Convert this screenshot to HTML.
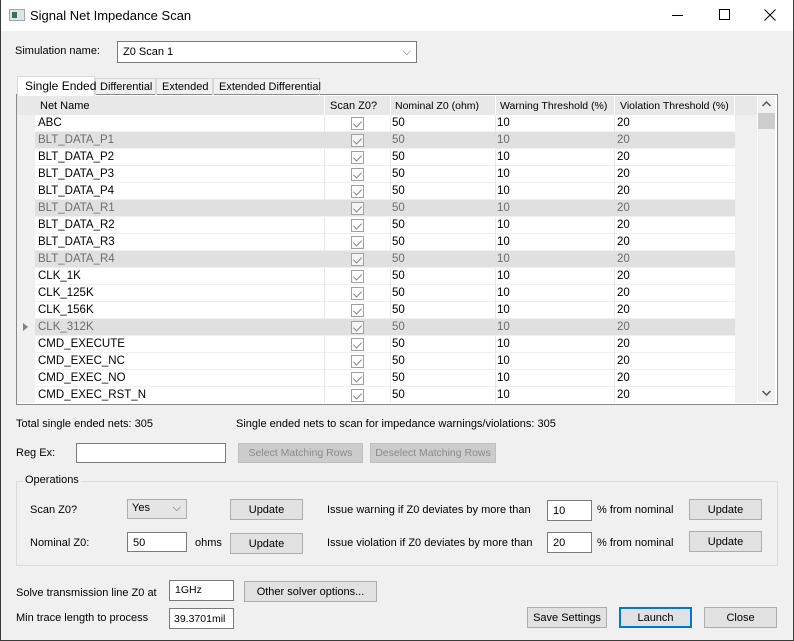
<!DOCTYPE html><html><head><style>
*{box-sizing:border-box;margin:0;padding:0}
body{width:794px;height:641px;overflow:hidden;font-family:"Liberation Sans",sans-serif;font-size:11px;color:#000;background:#f0f0f0;position:relative}
.a{position:absolute;white-space:nowrap}
.win{position:absolute;left:0;top:0;width:794px;height:641px;border:1px solid #3a3a3a;border-top:none}
.btn{position:absolute;background:#e1e1e1;border:1px solid #adadad;text-align:center;line-height:20px;white-space:nowrap}
.inp{position:absolute;background:#fff;border:1px solid #7a7a7a;padding-left:5px;line-height:20px;white-space:nowrap}
.row{position:absolute;left:35px;width:700px;height:17px;background:#fff;border-bottom:1px solid #f0f0f0;font-size:11.5px}
.row.g{background:#e0e0e0;color:#6d6d6d}
.row span{position:absolute;top:2px}
.cb{position:absolute;left:316px;top:2px;width:13px;height:13px;border:1px solid #a0a0a0;background:#fff}
.row.g .cb{background:#f4f4f4}
.cb:after{content:"";position:absolute;left:3px;top:1px;width:4px;height:7px;border:solid #888;border-width:0 1px 1px 0;transform:rotate(45deg)}
.vl{position:absolute;top:0;width:1px;height:17px;background:#e8e8e8}
.tab{position:absolute;border:1px solid #d9d9d9;border-bottom:none;line-height:17px;white-space:nowrap;font-size:11px}
</style></head><body>
<div class="win"></div>
<div class="a" style="left:1px;top:0;width:792px;height:31px;background:#fff"></div>
<div class="a" style="left:9px;top:9px;width:16px;height:12px;background:#dfe3e6;border:1px solid #9aa"><div style="position:absolute;left:2px;top:2px;width:5px;height:6px;background:#3c6e5e"></div></div>
<div class="a" style="left:30px;top:8px;font-size:13px">Signal Net Impedance Scan</div>
<div class="a" style="left:672px;top:15px;width:11px;height:1px;background:#000"></div>
<div class="a" style="left:719px;top:9px;width:11px;height:11px;border:1px solid #000"></div>
<svg class="a" style="left:764px;top:9px" width="12" height="12"><path d="M0.5 0.5L11.5 11.5M11.5 0.5L0.5 11.5" stroke="#000" stroke-width="1"/></svg>

<div class="a" style="left:15px;top:45px">Simulation name:</div>
<div class="inp" style="left:117px;top:41px;width:300px;height:22px;border-color:#7a7a7a">Z0 Scan 1<span style="position:absolute;right:5px;top:0;color:#555">⌵</span></div>

<div class="a" style="left:16px;top:94px;width:762px;height:311px;border:1px solid #898989;background:#fff"></div>
<div class="tab" style="left:95px;top:78px;width:61px;height:17px;padding-left:4px">Differential</div>
<div class="tab" style="left:156px;top:78px;width:57px;height:17px;padding-left:5px">Extended</div>
<div class="tab" style="left:213px;top:78px;width:107px;height:17px;padding-left:5px">Extended Differential</div>
<div class="tab" style="left:17px;top:76px;width:78px;height:20px;background:#fff;padding-left:7px;line-height:19px;font-size:12px">Single Ended</div>

<div class="a" style="left:17px;top:96px;width:740px;height:307px;background:#f0f0f0"></div>
<div class="a" style="left:17px;top:96px;width:740px;height:19px;background:#e8e8e8"></div>
<div class="a" style="left:40px;top:100px;font-size:11px">Net Name</div>
<div class="a" style="left:324px;top:96px;width:1px;height:19px;background:#fff"></div>
<div class="a" style="left:330px;top:100px;font-size:11px">Scan Z0?</div>
<div class="a" style="left:390px;top:96px;width:1px;height:19px;background:#fff"></div>
<div class="a" style="left:395px;top:100px;font-size:10.5px">Nominal Z0 (ohm)</div>
<div class="a" style="left:495px;top:96px;width:1px;height:19px;background:#fff"></div>
<div class="a" style="left:500px;top:100px;font-size:10.5px">Warning Threshold (%)</div>
<div class="a" style="left:614px;top:96px;width:1px;height:19px;background:#fff"></div>
<div class="a" style="left:620px;top:100px;font-size:10.5px">Violation Threshold (%)</div>
<div class="a" style="left:734px;top:96px;width:1px;height:19px;background:#fff"></div>
<div class="a" style="left:758px;top:96px;width:17px;height:306px;background:#f0f0f0"></div>
<svg class="a" style="left:762px;top:101px" width="9" height="6"><path d="M0.5 5L4.5 1L8.5 5" fill="none" stroke="#555" stroke-width="1.5"/></svg>
<div class="a" style="left:758px;top:113px;width:17px;height:16px;background:#cdcdcd"></div>
<svg class="a" style="left:762px;top:390px" width="9" height="6"><path d="M0.5 1L4.5 5L8.5 1" fill="none" stroke="#555" stroke-width="1.5"/></svg>
<div class="a" style="left:23px;top:323px;width:0;height:0;border-left:5px solid #808080;border-top:4px solid transparent;border-bottom:4px solid transparent"></div>
<div class="a" style="left:17px;top:115px;width:740px;height:288px;overflow:hidden">
<div style="position:relative;left:-17px;top:-115px">
<div class="row" style="top:115px"><span style="left:3px">ABC</span><div class="cb"></div><span style="left:357px">50</span><span style="left:462px">10</span><span style="left:582px">20</span><div class="vl" style="left:289px"></div><div class="vl" style="left:355px"></div><div class="vl" style="left:460px"></div><div class="vl" style="left:579px"></div></div>
<div class="row g" style="top:132px"><span style="left:3px">BLT_DATA_P1</span><div class="cb"></div><span style="left:357px">50</span><span style="left:462px">10</span><span style="left:582px">20</span></div>
<div class="row" style="top:149px"><span style="left:3px">BLT_DATA_P2</span><div class="cb"></div><span style="left:357px">50</span><span style="left:462px">10</span><span style="left:582px">20</span><div class="vl" style="left:289px"></div><div class="vl" style="left:355px"></div><div class="vl" style="left:460px"></div><div class="vl" style="left:579px"></div></div>
<div class="row" style="top:166px"><span style="left:3px">BLT_DATA_P3</span><div class="cb"></div><span style="left:357px">50</span><span style="left:462px">10</span><span style="left:582px">20</span><div class="vl" style="left:289px"></div><div class="vl" style="left:355px"></div><div class="vl" style="left:460px"></div><div class="vl" style="left:579px"></div></div>
<div class="row" style="top:183px"><span style="left:3px">BLT_DATA_P4</span><div class="cb"></div><span style="left:357px">50</span><span style="left:462px">10</span><span style="left:582px">20</span><div class="vl" style="left:289px"></div><div class="vl" style="left:355px"></div><div class="vl" style="left:460px"></div><div class="vl" style="left:579px"></div></div>
<div class="row g" style="top:200px"><span style="left:3px">BLT_DATA_R1</span><div class="cb"></div><span style="left:357px">50</span><span style="left:462px">10</span><span style="left:582px">20</span></div>
<div class="row" style="top:217px"><span style="left:3px">BLT_DATA_R2</span><div class="cb"></div><span style="left:357px">50</span><span style="left:462px">10</span><span style="left:582px">20</span><div class="vl" style="left:289px"></div><div class="vl" style="left:355px"></div><div class="vl" style="left:460px"></div><div class="vl" style="left:579px"></div></div>
<div class="row" style="top:234px"><span style="left:3px">BLT_DATA_R3</span><div class="cb"></div><span style="left:357px">50</span><span style="left:462px">10</span><span style="left:582px">20</span><div class="vl" style="left:289px"></div><div class="vl" style="left:355px"></div><div class="vl" style="left:460px"></div><div class="vl" style="left:579px"></div></div>
<div class="row g" style="top:251px"><span style="left:3px">BLT_DATA_R4</span><div class="cb"></div><span style="left:357px">50</span><span style="left:462px">10</span><span style="left:582px">20</span></div>
<div class="row" style="top:268px"><span style="left:3px">CLK_1K</span><div class="cb"></div><span style="left:357px">50</span><span style="left:462px">10</span><span style="left:582px">20</span><div class="vl" style="left:289px"></div><div class="vl" style="left:355px"></div><div class="vl" style="left:460px"></div><div class="vl" style="left:579px"></div></div>
<div class="row" style="top:285px"><span style="left:3px">CLK_125K</span><div class="cb"></div><span style="left:357px">50</span><span style="left:462px">10</span><span style="left:582px">20</span><div class="vl" style="left:289px"></div><div class="vl" style="left:355px"></div><div class="vl" style="left:460px"></div><div class="vl" style="left:579px"></div></div>
<div class="row" style="top:302px"><span style="left:3px">CLK_156K</span><div class="cb"></div><span style="left:357px">50</span><span style="left:462px">10</span><span style="left:582px">20</span><div class="vl" style="left:289px"></div><div class="vl" style="left:355px"></div><div class="vl" style="left:460px"></div><div class="vl" style="left:579px"></div></div>
<div class="row g" style="top:319px"><span style="left:3px">CLK_312K</span><div class="cb"></div><span style="left:357px">50</span><span style="left:462px">10</span><span style="left:582px">20</span></div>
<div class="row" style="top:336px"><span style="left:3px">CMD_EXECUTE</span><div class="cb"></div><span style="left:357px">50</span><span style="left:462px">10</span><span style="left:582px">20</span><div class="vl" style="left:289px"></div><div class="vl" style="left:355px"></div><div class="vl" style="left:460px"></div><div class="vl" style="left:579px"></div></div>
<div class="row" style="top:353px"><span style="left:3px">CMD_EXEC_NC</span><div class="cb"></div><span style="left:357px">50</span><span style="left:462px">10</span><span style="left:582px">20</span><div class="vl" style="left:289px"></div><div class="vl" style="left:355px"></div><div class="vl" style="left:460px"></div><div class="vl" style="left:579px"></div></div>
<div class="row" style="top:370px"><span style="left:3px">CMD_EXEC_NO</span><div class="cb"></div><span style="left:357px">50</span><span style="left:462px">10</span><span style="left:582px">20</span><div class="vl" style="left:289px"></div><div class="vl" style="left:355px"></div><div class="vl" style="left:460px"></div><div class="vl" style="left:579px"></div></div>
<div class="row" style="top:387px"><span style="left:3px">CMD_EXEC_RST_N</span><div class="cb"></div><span style="left:357px">50</span><span style="left:462px">10</span><span style="left:582px">20</span><div class="vl" style="left:289px"></div><div class="vl" style="left:355px"></div><div class="vl" style="left:460px"></div><div class="vl" style="left:579px"></div></div>
</div></div>

<div class="a" style="left:16px;top:418px">Total single ended nets: 305</div>
<div class="a" style="left:236px;top:418px">Single ended nets to scan for impedance warnings/violations: 305</div>
<div class="a" style="left:16px;top:447px">Reg Ex:</div>
<div class="inp" style="left:76px;top:443px;width:150px;height:20px"></div>
<div class="btn" style="left:238px;top:443px;width:125px;height:20px;line-height:18px;color:#8a8a8a;background:#cccccc;border-color:#bfbfbf;font-size:10.5px">Select Matching Rows</div>
<div class="btn" style="left:370px;top:443px;width:126px;height:20px;line-height:18px;color:#8a8a8a;background:#cccccc;border-color:#bfbfbf;font-size:10.5px">Deselect Matching Rows</div>

<div class="a" style="left:16px;top:481px;width:762px;height:85px;border:1px solid #dcdcdc"></div>
<div class="a" style="left:23px;top:474px;background:#f0f0f0;padding:0 2px">Operations</div>
<div class="a" style="left:30px;top:504px">Scan Z0?</div>
<div class="btn" style="left:127px;top:499px;width:60px;height:20px;line-height:17px;text-align:left;padding-left:4px;background:#e5e5e5">Yes<span style="position:absolute;right:5px;color:#555">⌵</span></div>
<div class="btn" style="left:230px;top:499px;width:73px;height:21px">Update</div>
<div class="a" style="left:327px;top:504px">Issue warning if Z0 deviates by more than</div>
<div class="inp" style="left:547px;top:500px;width:45px;height:21px">10</div>
<div class="a" style="left:597px;top:504px">% from nominal</div>
<div class="btn" style="left:689px;top:499px;width:73px;height:21px">Update</div>

<div class="a" style="left:30px;top:537px">Nominal Z0:</div>
<div class="inp" style="left:127px;top:532px;width:60px;height:20px">50</div>
<div class="a" style="left:195px;top:537px">ohms</div>
<div class="btn" style="left:230px;top:533px;width:73px;height:21px">Update</div>
<div class="a" style="left:327px;top:537px">Issue violation if Z0 deviates by more than</div>
<div class="inp" style="left:547px;top:532px;width:45px;height:21px">20</div>
<div class="a" style="left:597px;top:537px">% from nominal</div>
<div class="btn" style="left:689px;top:531px;width:73px;height:21px">Update</div>

<div class="a" style="left:16px;top:587px">Solve transmission line Z0 at</div>
<div class="inp" style="left:169px;top:580px;width:65px;height:21px;line-height:18px;font-size:10.5px">1GHz</div>
<div class="btn" style="left:244px;top:581px;width:133px;height:21px">Other solver options...</div>
<div class="a" style="left:16px;top:612px">Min trace length to process</div>
<div class="inp" style="left:169px;top:608px;width:65px;height:21px;padding-left:4px;font-size:10.5px">39.3701mil</div>
<div class="btn" style="left:527px;top:607px;width:80px;height:21px">Save Settings</div>
<div class="btn" style="left:619px;top:607px;width:73px;height:21px;border:2px solid #0078d7;line-height:18px">Launch</div>
<div class="btn" style="left:704px;top:607px;width:73px;height:21px">Close</div>
</body></html>
